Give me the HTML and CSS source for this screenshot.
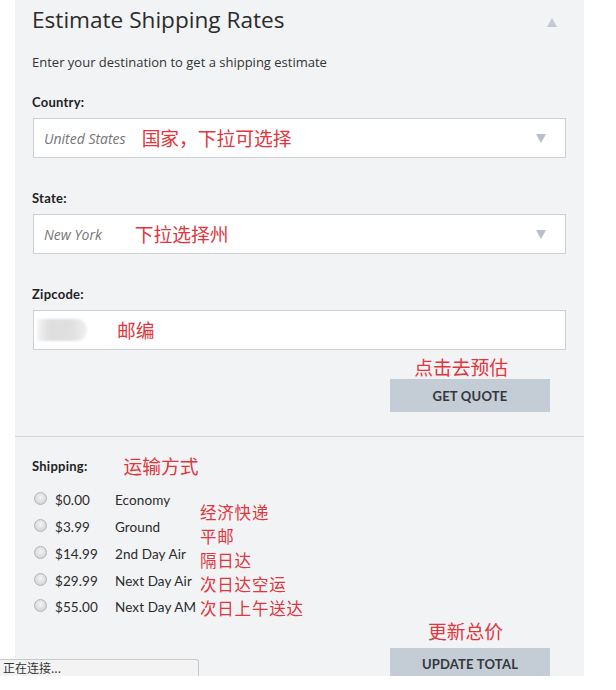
FILE: index.html
```html
<!DOCTYPE html>
<html lang="en">
<head>
<meta charset="utf-8">
<title>Estimate Shipping Rates</title>
<link rel="stylesheet" href="styles.css">
</head>
<body>
<div class="page">
  <div class="panel">
    <section class="estimate">
      <div class="head">
        <h2 class="title">Estimate Shipping Rates</h2>
        <span class="caret caret-up"></span>
      </div>
      <p class="intro">Enter your destination to get a shipping estimate</p>

      <div class="field">
        <div class="label">Country:</div>
        <div class="select">
          <span class="value">United States</span>
          <span class="note note-country">国家，下拉可选择</span>
          <span class="caret caret-down"></span>
        </div>
      </div>

      <div class="field">
        <div class="label">State:</div>
        <div class="select">
          <span class="value">New York</span>
          <span class="note note-state">下拉选择州</span>
          <span class="caret caret-down"></span>
        </div>
      </div>

      <div class="field field-last">
        <div class="label">Zipcode:</div>
        <div class="select">
          <span class="blob"></span>
          <span class="note note-zip">邮编</span>
        </div>
      </div>

      <div class="action action-quote">
        <span class="note note-quote">点击去预估</span>
        <button class="btn">GET QUOTE</button>
      </div>
    </section>

    <section class="shipping">
      <div class="ship-head">
        <span class="label">Shipping:</span>
        <span class="note note-ship">运输方式</span>
      </div>
      <div class="ship-body">
        <ul class="options">
          <li class="option"><span class="radio"></span><span class="price">$0.00</span><span class="name">Economy</span></li>
          <li class="option"><span class="radio"></span><span class="price">$3.99</span><span class="name">Ground</span></li>
          <li class="option"><span class="radio"></span><span class="price">$14.99</span><span class="name">2nd Day Air</span></li>
          <li class="option"><span class="radio"></span><span class="price">$29.99</span><span class="name">Next Day Air</span></li>
          <li class="option"><span class="radio"></span><span class="price">$55.00</span><span class="name">Next Day AM</span></li>
        </ul>
        <ul class="notes">
          <li class="note">经济快递</li>
          <li class="note">平邮</li>
          <li class="note">隔日达</li>
          <li class="note">次日达空运</li>
          <li class="note">次日上午送达</li>
        </ul>
      </div>
      <div class="action action-update">
        <span class="note note-update">更新总价</span>
        <button class="btn">UPDATE TOTAL</button>
      </div>
    </section>
  </div>
  <div class="status">正在连接...</div>
</div>
</body>
</html>
```

FILE: styles.css
```css
* { box-sizing: border-box; }

html, body {
  margin: 0;
  padding: 0;
  background: #ffffff;
}

body {
  font-family: Lato, "Noto Sans", "Noto Sans CJK SC", sans-serif;
  color: #2d2d2d;
}

.page {
  position: relative;
  width: 616px;
  height: 676px;
  overflow: hidden;
}

.panel {
  margin-left: 15px;
  width: 569px;
  height: 676px;
  background: #f2f3f5;
}

/* ---------- estimate section ---------- */
.estimate {
  padding: 7px 18px 24px 18px;
  border-bottom: 1px solid #d4d6d9;
}

.head {
  display: flex;
  align-items: flex-start;
  justify-content: space-between;
}

.title {
  margin: 0 0 0 -1px;
  font-family: "Open Sans", Lato, sans-serif;
  font-size: 22.6px;
  font-weight: 400;
  line-height: 26px;
  color: #2b2b2b;
}

.caret {
  width: 0;
  height: 0;
  border-left: 5px solid transparent;
  border-right: 5px solid transparent;
}

.caret-up {
  margin: 11px 9px 0 0;
  border-bottom: 9px solid #c3c8d2;
}

.caret-down {
  margin-left: auto;
  margin-right: 19px;
  border-top: 9px solid #b9bfca;
}

.intro {
  margin: 21px 0 24px -1px;
  font-family: "Open Sans", Lato, sans-serif;
  font-size: 13px;
  line-height: 16px;
  color: #333333;
}

.field {
  margin-bottom: 32px;
}

.field-last {
  margin-bottom: 0;
}

.label {
  font-size: 13px;
  font-weight: 700;
  line-height: 16px;
  letter-spacing: 0.25px;
  color: #222222;
  margin-bottom: 8px;
  margin-left: -1px;
}

.select {
  display: flex;
  align-items: center;
  height: 40px;
  padding-left: 10px;
  background: #ffffff;
  border: 1px solid #cdd0d5;
}

.value {
  font-family: "Open Sans", Lato, sans-serif;
  font-size: 14px;
  font-style: italic;
  color: #767676;
}

.note {
  font-family: "Noto Sans CJK SC", sans-serif;
  font-size: 18.75px;
  line-height: 24px;
  color: #e2353c;
  font-weight: 400;
}

.note-country { margin-left: 16px; }
.note-state { margin-left: 33px; }
.note-zip { margin-left: 30px; }

.blob {
  width: 50px;
  height: 22px;
  margin-left: -7px;
  border-radius: 3px 12px 12px 3px;
  background: linear-gradient(to right, #f4f4f4 0%, #dedede 25%, #e0e0e0 70%, #f0f0f0 100%);
  filter: blur(0.8px);
}

.action {
  display: flex;
  flex-direction: column;
  align-items: flex-end;
  padding-right: 16px;
}

.action-quote {
  margin-top: 7px;
}

.note-quote {
  margin-right: 42px;
  line-height: 20px;
  margin-bottom: 2px;
}

.btn {
  width: 160px;
  height: 33px;
  border: 0;
  margin: 0;
  padding: 0;
  background: #c4ccd5;
  font-family: Lato, "Noto Sans", sans-serif;
  font-size: 13px;
  font-weight: 700;
  color: #33373d;
  letter-spacing: 0.2px;
}

/* ---------- shipping section ---------- */
.shipping {
  padding: 19px 18px 0 18px;
}

.ship-head {
  display: flex;
  align-items: center;
  height: 20px;
}

.ship-head .label {
  margin-bottom: 0;
}

.note-ship {
  margin-left: 36px;
}

.ship-body {
  display: flex;
  margin-top: 11px;
}

.options,
.notes {
  list-style: none;
  margin: 0;
  padding: 0;
}

.options {
  width: 167px;
}

.option {
  display: flex;
  align-items: center;
  height: 26.75px;
  font-size: 13.5px;
  color: #2b2b2b;
  letter-spacing: 0.1px;
}

.radio {
  width: 13px;
  height: 13px;
  margin-left: 1px;
  margin-top: -3px;
  border-radius: 50%;
  border: 1px solid #b4b4b4;
  background: radial-gradient(circle at 50% 40%, #f4f4f4 0%, #dcdcdc 60%, #c9c9c9 100%);
}

.price {
  margin-left: 8px;
  width: 60px;
}

.name {
  white-space: nowrap;
}

.notes {
  padding-top: 14px;
}

.notes .note {
  font-size: 16.5px;
  line-height: 23.9px;
  letter-spacing: 0.8px;
}

.action-update {
  margin-top: -2px;
}

.note-update {
  margin-right: 47px;
  line-height: 24px;
  margin-bottom: 5px;
}

/* ---------- browser status overlay ---------- */
.status {
  position: absolute;
  left: 0;
  bottom: 0;
  width: 199px;
  height: 17px;
  padding-left: 3px;
  background: #f3f3f3;
  border: 1px solid #c9c9c9;
  border-left: 0;
  border-bottom: 0;
  border-radius: 0 3px 0 0;
  font-family: "Noto Sans CJK SC", sans-serif;
  font-size: 12px;
  line-height: 16px;
  color: #333333;
}
```
